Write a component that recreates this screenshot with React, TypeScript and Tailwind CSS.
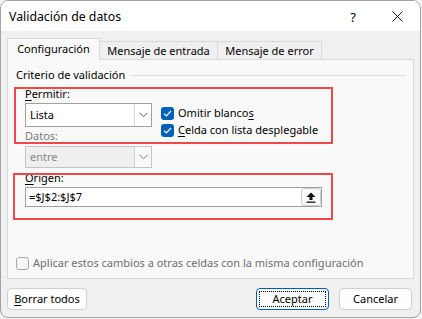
import React from "react";

function Chevron({ color = "#606060" }: { color?: string }) {
  return (
    <svg width="9" height="6" viewBox="0 0 9 6">
      <path d="M0.5 0.8 L4.5 4.8 L8.5 0.8" fill="none" stroke={color} strokeWidth="1" />
    </svg>
  );
}

function Check() {
  return (
    <span className="w-[13px] h-[13px] rounded-[3px] bg-[#005fb8] flex items-center justify-center shrink-0">
      <svg width="9" height="7" viewBox="0 0 9 7">
        <path d="M1 3.6 L3.4 6 L8 1" fill="none" stroke="#ffffff" strokeWidth="1.2" />
      </svg>
    </span>
  );
}

export default function App() {
  return (
    <div className="w-[422px] h-[319px] bg-[#f3f3f3] font-['Noto_Sans',sans-serif] text-[11px] leading-[16px] text-[#1a1a1a] relative overflow-hidden">
      <div className="w-[421px] h-[318px] border border-[#a3a3a3] rounded-[8px] overflow-hidden flex flex-col bg-[#f0f0f0]">
        {/* Title bar */}
        <div className="h-[30px] bg-white flex items-center pl-[8px] shrink-0">
          <span className="text-[12.3px] text-black mt-[1px]">Validación de datos</span>
          <span className="ml-auto text-[13px] text-black mr-[36px] mt-[1px]">?</span>
          <span className="mr-[17px] flex items-center">
            <svg width="11" height="11" viewBox="0 0 11 11">
              <path d="M0.5 0.5 L10.5 10.5 M10.5 0.5 L0.5 10.5" stroke="#1a1a1a" strokeWidth="1" />
            </svg>
          </span>
        </div>

        {/* Content */}
        <div className="pl-[6px] pt-[7px] flex flex-col">
          {/* Tabs */}
          <div className="flex items-end h-[22px]">
            <div className="relative z-10 h-[22px] w-[93px] border border-b-0 border-[#d9d9d9] bg-[#f9f9f9] flex items-center justify-center pb-[1px] text-black">
              Configuración
            </div>
            <div className="h-[19px] w-[118px] border border-b-0 border-l-0 border-[#d9d9d9] bg-[#f0f0f0] flex items-center justify-center text-black">
              Mensaje de entrada
            </div>
            <div className="h-[19px] w-[104px] border border-b-0 border-l-0 border-[#d9d9d9] bg-[#f0f0f0] flex items-center justify-center text-black">
              Mensaje de error
            </div>
          </div>

          {/* Panel */}
          <div className="relative z-0 -mt-px w-[407px] h-[220px] border border-[#d9d9d9] bg-[#f9f9f9] flex flex-col">
            {/* group header */}
            <div className="mt-[7px] ml-[8px] mr-[7px] flex items-center">
              <span className="text-black">Criterio de validación</span>
              <span className="flex-1 h-px bg-[#dcdcdc] ml-[6px] mt-[1px]"></span>
            </div>

            <div className="ml-[17px] flex mt-[3px]">
              {/* Left column */}
              <div className="flex flex-col w-[127px]">
                <span className="text-black">
                  <span className="underline underline-offset-2">P</span>ermitir:
                </span>
                <div className="mt-[1px] h-[24px] border border-[#a0a0a0] bg-white flex">
                  <span className="flex-1 flex items-center pl-[4px] text-black">Lista</span>
                  <span className="w-[17px] border-l border-[#d9d9d9] flex items-center justify-center">
                    <Chevron />
                  </span>
                </div>
                <span className="mt-[1px] text-[#7a7a7a]">Datos:</span>
                <div className="mt-[2px] h-[22px] border border-[#c4c4c4] bg-[#efefef] flex">
                  <span className="flex-1 flex items-center pl-[4px] text-[#8a8a8a]">entre</span>
                  <span className="w-[17px] border-l border-[#d0d0d0] bg-[#f9f9f9] flex items-center justify-center">
                    <Chevron color="#7a7a7a" />
                  </span>
                </div>
              </div>

              {/* Right column */}
              <div className="ml-[9px] pt-[19px] flex flex-col gap-[1px]">
                <div className="flex items-center h-[16px] gap-[4px]">
                  <Check />
                  <span className="text-black">
                    Omitir blanco<span className="underline underline-offset-2">s</span>
                  </span>
                </div>
                <div className="flex items-center h-[16px] gap-[4px]">
                  <Check />
                  <span className="text-black">
                    <span className="underline underline-offset-2">C</span>elda con lista desplegable
                  </span>
                </div>
              </div>
            </div>

            {/* Origen */}
            <div className="ml-[17px] mt-[2px] flex flex-col">
              <span className="text-black">
                <span className="underline underline-offset-2">O</span>rigen:
              </span>
              <div className="mt-[1px] w-[297px] h-[20px] border border-[#a0a0a0] bg-white flex items-center">
                <span className="flex-1 pl-[3px] text-black">=$J$2:$J$7</span>
                <span className="w-[20px] h-[18px] border border-[#cfcfcf] rounded-[3px] bg-[#fbfbfb] flex items-center justify-center">
                  <svg width="10" height="11" viewBox="0 0 10 11">
                    <path d="M5 0.5 L9.5 5 L6.5 5 L6.5 8 L3.5 8 L3.5 5 L0.5 5 Z" fill="#111" />
                    <rect x="0.5" y="9.5" width="9" height="1.3" fill="#111" />
                  </svg>
                </span>
              </div>
            </div>

            {/* Apply checkbox */}
            <div className="mt-auto mb-[7px] ml-[8px] flex items-center gap-[4px] h-[16px]">
              <span className="w-[13px] h-[13px] rounded-[3px] border border-[#a8a8a8] bg-[#f6f6f6] shrink-0"></span>
              <span className="text-[#6e6e6e]">Aplicar estos cambios a otras celdas con la misma configuración</span>
            </div>

            {/* Annotation boxes */}
            <div className="absolute left-[6px] top-[27px] w-[319px] h-[57px] border-2 border-[#f04848] pointer-events-none"></div>
            <div className="absolute left-[5px] top-[113px] w-[320px] h-[47px] border-2 border-[#f04848] pointer-events-none"></div>
          </div>
        </div>

        {/* Buttons */}
        <div className="mt-[9px] pl-[6px] flex items-center">
          <div className="w-[80px] h-[22px] border border-[#d0d0d0] rounded-[4px] bg-[#fdfdfd] flex items-center justify-center text-black">
            <span>
              <span className="underline underline-offset-2">B</span>orrar todos
            </span>
          </div>
          <div className="ml-[169px] w-[73px] h-[22px] border border-[#005fb8] rounded-[4px] bg-[#fdfdfd] p-[2px] flex">
            <div className="flex-1 border border-dotted border-black flex items-center justify-center text-black">
              Aceptar
            </div>
          </div>
          <div className="ml-[10px] w-[73px] h-[22px] border border-[#d0d0d0] rounded-[4px] bg-[#fdfdfd] flex items-center justify-center text-black">
            Cancelar
          </div>
        </div>
      </div>
    </div>
  );
}
